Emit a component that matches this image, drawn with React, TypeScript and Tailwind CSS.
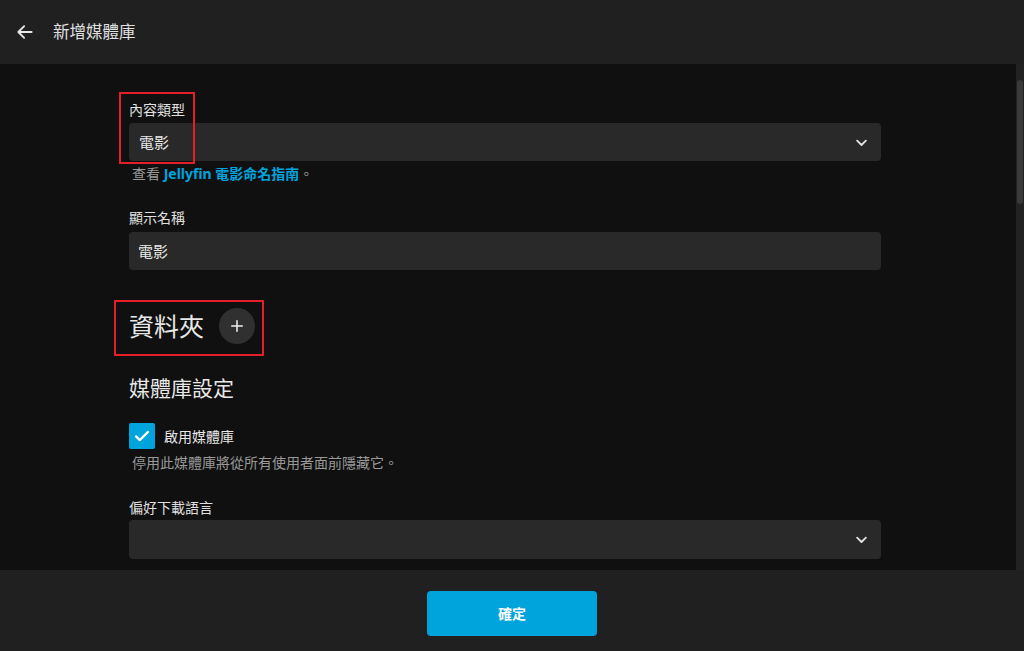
import React from "react";

const ChevronDown = () => (
  <svg width="15" height="15" viewBox="0 0 24 24" fill="none" stroke="#e0e0e0" strokeWidth="3" strokeLinecap="round" strokeLinejoin="round">
    <path d="M5 9l7 7 7-7" />
  </svg>
);

const Field = ({ label, children }: { label: string; children: React.ReactNode }) => (
  <div className="flex flex-col">
    <label className="text-[14px] leading-[20px] text-[#e0e0e0]">{label}</label>
    {children}
  </div>
);

const App = () => {
  return (
    <div
      className="w-[1024px] h-[651px] flex flex-col bg-[#101010] overflow-hidden"
      style={{ fontFamily: '"Noto Sans", "Noto Sans CJK TC", sans-serif' }}
    >
      <header className="h-[64px] shrink-0 bg-[#202020] flex items-center px-[15px] gap-[18px]">
        <svg width="20" height="20" viewBox="0 0 24 24" fill="none" stroke="#e8e8e8" strokeWidth="2.2" strokeLinecap="round" strokeLinejoin="round">
          <path d="M20 12H5M11 5l-7 7 7 7" />
        </svg>
        <h1 className="text-[16.5px] text-[#e0e0e0]">新增媒體庫</h1>
      </header>

      <div className="flex flex-1 min-h-0">
        <main className="flex-1 relative overflow-hidden">
          <div className="ml-[129px] w-[752px] pt-[36px] flex flex-col">
            <Field label="內容類型">
              <div className="mt-[3px] h-[38px] rounded-[4px] bg-[#292929] flex items-center justify-between px-[10px] pr-[12px]">
                <span className="text-[15px] text-[#e8e8e8]">電影</span>
                <ChevronDown />
              </div>
            </Field>
            <p className="mt-[3px] ml-[3px] text-[14px] leading-[20px] text-[#999]">
              查看 <a className="text-[#00a4dc] font-bold">Jellyfin 電影命名指南</a>。
            </p>

            <div className="mt-[24px]">
              <Field label="顯示名稱">
                <div className="mt-[4px] h-[38px] rounded-[4px] bg-[#292929] flex items-center px-[9px]">
                  <span className="text-[15px] text-[#e8e8e8]">電影</span>
                </div>
              </Field>
            </div>

            <div className="mt-[38px] h-[36px] flex items-center gap-[15px]">
              <h2 className="text-[25px] leading-[36px] text-[#e8e8e8]">資料夾</h2>
              <button className="w-[36px] h-[36px] rounded-full bg-[#303030] flex items-center justify-center">
                <svg width="14" height="14" viewBox="0 0 24 24" fill="none" stroke="#f0f0f0" strokeWidth="2.6" strokeLinecap="round">
                  <path d="M12 3v18M3 12h18" />
                </svg>
              </button>
            </div>

            <h2 className="mt-[30px] text-[21px] leading-[28px] text-[#e8e8e8]">媒體庫設定</h2>

            <div className="mt-[21px] flex items-center gap-[9px]">
              <div className="w-[26px] h-[26px] rounded-[2px] bg-[#00a4dc] flex items-center justify-center">
                <svg width="18" height="18" viewBox="0 0 24 24" fill="none" stroke="#fff" strokeWidth="3" strokeLinecap="round" strokeLinejoin="round">
                  <path d="M4 12.5l5 5L20 6.5" />
                </svg>
              </div>
              <span className="text-[14px] text-[#e8e8e8]">啟用媒體庫</span>
            </div>
            <p className="mt-[4px] ml-[3px] text-[14px] leading-[20px] text-[#999]">停用此媒體庫將從所有使用者面前隱藏它。</p>

            <div className="mt-[25px]">
              <Field label="偏好下載語言">
                <div className="mt-[2px] h-[39px] rounded-[4px] bg-[#292929] flex items-center justify-end pr-[12px]">
                  <ChevronDown />
                </div>
              </Field>
            </div>
          </div>

          <div className="absolute left-[119px] top-[28px] w-[76px] h-[72px] border-2 border-[#e3202a]" />
          <div className="absolute left-[114px] top-[236px] w-[150px] h-[56px] border-2 border-[#e3202a]" />
        </main>

        <div className="w-[8px] shrink-0 bg-[#222] flex flex-col items-center pt-[16px]">
          <div className="w-[6px] h-[124px] rounded-[3px] bg-[#3a3a3a]" />
        </div>
      </div>

      <footer className="h-[81px] shrink-0 bg-[#202020] flex items-start justify-center pt-[21px]">
        <button className="w-[170px] h-[45px] rounded-[4px] bg-[#00a4dc] text-white font-bold text-[14px]">
          確定
        </button>
      </footer>
    </div>
  );
};

export default App;
